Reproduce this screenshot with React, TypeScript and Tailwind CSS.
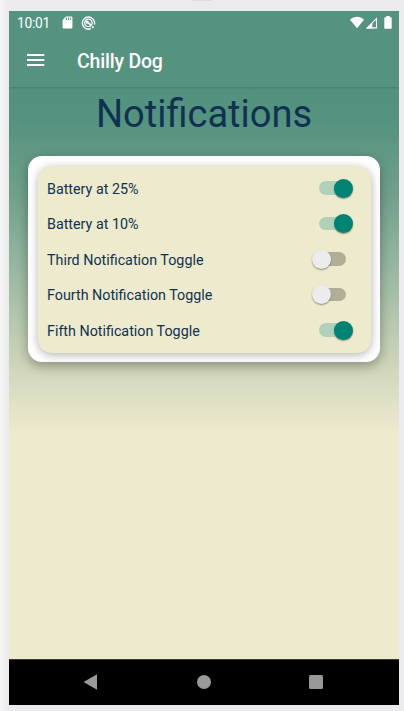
import { useState } from "react";

const initial = [
  { label: "Battery at 25%", on: true },
  { label: "Battery at 10%", on: true },
  { label: "Third Notification Toggle", on: false },
  { label: "Fourth Notification Toggle", on: false },
  { label: "Fifth Notification Toggle", on: true },
];

function Toggle({ on, onClick }: { on: boolean; onClick: () => void }) {
  return (
    <button
      role="switch"
      aria-checked={on}
      onClick={onClick}
      className={`relative mt-[0.5px] h-[13.5px] w-[27px] rounded-full ${on ? "bg-[#b0d1b9]" : "bg-[#b1ae98]"}`}
    >
      <span
        className={`absolute top-[-2.5px] size-[19px] rounded-full shadow-[0_1px_1.5px_rgba(0,0,0,0.4)] ${
          on ? "left-[15px] bg-[#018374]" : "left-[-7px] bg-[#ececec]"
        }`}
      />
    </button>
  );
}

function StatusBar() {
  return (
    <div className="flex h-[23px] items-center pl-2 text-white">
      <span className="w-[33px] pt-[2px] text-[13.8px] leading-none tracking-[-0.3px]">10:01</span>
      <svg className="ml-3" width="11" height="13" viewBox="0 0 11 13" fill="none">
        <path d="M4 0.5H9.4Q10.4 .5 10.4 1.5V11.5Q10.4 12.5 9.4 12.5H1.6Q.6 12.5 .6 11.5V4Z" fill="white" />
        <path d="M4.4 1.5V4M6.5 1.5V4M8.6 1.5V4" stroke="#55927f" strokeWidth="1" />
      </svg>
      <svg className="ml-[8px]" width="15" height="14" viewBox="0 0 15 14" fill="none" stroke="white">
        <path d="M9.8 12.7A6.1 6.1 0 1 1 13.4 8.5" strokeWidth="1.4" />
        <circle cx="7.4" cy="6.9" r="3.7" strokeWidth="1.3" />
        <path d="M5 4.6L10.4 9.6M5.2 7.4L7.4 5.4" strokeWidth="1.7" />
        <circle cx="11.8" cy="11.2" r=".8" fill="white" strokeWidth=".6" />
      </svg>
      <svg className="ml-auto" width="14" height="13" viewBox="0 0 14 13" fill="white">
        <path d="M7 12.3L0 3.7C4-.2 10-.2 14 3.7Z" />
      </svg>
      <svg className="ml-[2px]" width="12" height="12" viewBox="0 0 12 12">
        <path d="M1.2 10.9L10.5 1.5V10.9Z" fill="none" stroke="white" strokeWidth="1.1" />
        <path d="M0.2 11.5L6.3 5.4V11.5Z" fill="white" />
      </svg>
      <svg className="ml-[6px] mr-[7px]" width="8" height="13" viewBox="0 0 8 13" fill="white">
        <path d="M2.3 0H5.7V1.3H7Q7.7 1.3 7.7 2V12Q7.7 12.8 7 12.8H1Q.3 12.8 .3 12V2Q.3 1.3 1 1.3H2.3Z" />
      </svg>
    </div>
  );
}

export default function App() {
  const [items, setItems] = useState(initial);
  const flip = (index: number) =>
    setItems(items.map((item, i) => (i === index ? { ...item, on: !item.on } : item)));

  return (
    <div className="h-[711px] w-[404px] overflow-hidden bg-[linear-gradient(90deg,#f5f5f6_0,#ebebed_8px,#ebebed_100%)] pl-[9px] font-[Roboto,sans-serif]">
      <div className="ml-[183px] h-px w-[20px] rounded-b bg-[#dcdcde]" />
      <div className="mt-[10px] flex h-[694px] w-[390px] flex-col overflow-hidden bg-[#eeeace]">
        <header className="z-10 h-[76px] shrink-0 bg-[#55927f] shadow-[0_1px_2px_rgba(0,0,0,0.15)]">
          <StatusBar />
          <div className="flex h-[53px] items-center pl-[18px] pb-[1px] text-white">
            <svg width="18" height="12" viewBox="0 0 18 12" fill="white">
              <path d="M0 0H17.3V2H0ZM0 5H17.3V7H0ZM0 10H17.3V12H0Z" />
            </svg>
            <h1 className="ml-[32px] pt-[3px] text-[19.5px] font-medium leading-none tracking-[-0.2px]">Chilly Dog</h1>
          </div>
        </header>
        <main className="flex-1 bg-[linear-gradient(180deg,#53917e_0,#55927f_32px,#71a18b_110px,#8bb09b_158px,#cfd6ba_280px,#eeeace_347px)] px-[19px]">
          <h2 className="h-[69px] pt-[6px] text-center text-[38px] leading-[43px] text-[#0e3250]">Notifications</h2>
          <section className="h-[206px] w-[352px] rounded-[14px] bg-white p-[9.5px] shadow-[0_4px_12px_rgba(0,0,0,0.32)]">
            <div className="h-[187px] rounded-[14px] bg-[#eeeace] pl-[9.5px] pr-[24.5px] pt-[4.5px] shadow-[0_2px_10px_rgba(0,0,0,0.3)]">
              {items.map((item, index) => (
                <div key={item.label} className="flex h-[35.5px] items-center justify-between">
                  <span className="pt-[1.5px] text-[14.3px] leading-5 text-[#0e3250]">{item.label}</span>
                  <Toggle on={item.on} onClick={() => flip(index)} />
                </div>
              ))}
            </div>
          </section>
        </main>
        <nav className="flex h-[46px] shrink-0 items-center border-t border-[#3c3b30] bg-black pb-px pl-[74px]">
          <svg width="14" height="16" viewBox="0 0 14 16" fill="#999">
            <path d="M.5 8L14 .2V15.8Z" />
          </svg>
          <div className="ml-[100px] size-[14px] rounded-full bg-[#999]" />
          <div className="ml-[97.5px] size-[14.5px] rounded-[1.5px] bg-[#999]" />
        </nav>
      </div>
    </div>
  );
}
